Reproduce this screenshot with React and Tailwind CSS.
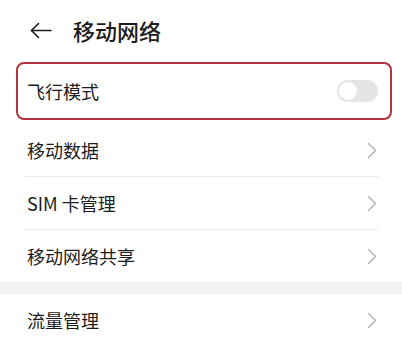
const font = { fontFamily: '"Noto Sans CJK SC", "Noto Sans", sans-serif' }

function Chevron() {
  return (
    <svg width="10" height="17" viewBox="0 0 10 17" fill="none" stroke="#b4b4b4" strokeWidth="1.5" strokeLinecap="round" strokeLinejoin="round">
      <path d="M1.5 1.5L8.5 8.5L1.5 15.5" />
    </svg>
  )
}

// one plain list row with a chevron on the right
function Row({ label, divider }) {
  return (
    <div className="flex flex-col">
      <div className="h-[52px] flex items-center justify-between pl-[27px] pr-[25px]">
        <span className="text-[18px] text-[#1c1c1c] leading-none">{label}</span>
        <Chevron />
      </div>
      {divider && <div className="h-px bg-[#e9e9e9] ml-[25px] mr-[24px]" />}
    </div>
  )
}

export default function App() {
  return (
    <div className="w-[402px] h-[342px] bg-white overflow-hidden" style={font}>
      {/* header */}
      <div className="h-[62px] flex items-center pl-[30px] pb-[2px]">
        <svg width="22" height="17" viewBox="0 0 22 17" fill="none" stroke="#1c1c1c" strokeWidth="1.6" strokeLinecap="round" strokeLinejoin="round">
          <path d="M21 8.5H1.5" />
          <path d="M8.5 1.5L1.5 8.5L8.5 15.5" />
        </svg>
        <h1 className="ml-[21px] text-[22px] font-medium text-[#1c1c1c] leading-none">移动网络</h1>
      </div>

      {/* highlighted airplane mode row */}
      <div className="ml-[16px] mr-[10px] h-[58px] border-[2.5px] border-[#b2343f] rounded-[8px] flex items-center justify-between pl-[9px] pr-[12px]">
        <span className="text-[18px] text-[#1c1c1c] leading-none">飞行模式</span>
        <div className="w-[41px] h-[22px] rounded-full bg-[#e4e4e4] p-[2px] flex items-center">
          <div className="w-[18px] h-[18px] rounded-full bg-white" />
        </div>
      </div>

      <div className="mt-[4px]">
        <Row label="移动数据" divider />
        <Row label="SIM 卡管理" divider />
        <Row label="移动网络共享" />
      </div>

      <div className="h-[12px] bg-[#f3f3f3]" />

      <Row label="流量管理" />
    </div>
  )
}
